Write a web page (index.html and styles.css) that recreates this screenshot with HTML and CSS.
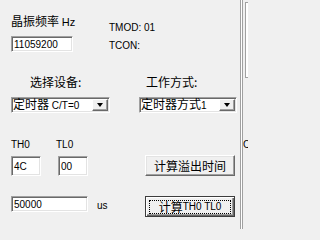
FILE: index.html
```html
<!DOCTYPE html>
<html>
<head>
<meta charset="utf-8">
<link rel="stylesheet" href="styles.css">
</head>
<body>
<div class="app">
  <div class="main">
    <div class="row1">
      <div class="col-freq">
        <div class="lbl"><span class="cjk">晶振频率</span> <span class="hz">Hz</span></div>
        <div class="field in-freq">11059200</div>
      </div>
      <div class="col-reg">
        <div class="reg">TMOD: 01</div>
        <div class="reg reg2">TCON:</div>
      </div>
    </div>
    <div class="row2">
      <div class="grp grp1">
        <div class="lbl cjk lbl-dev">选择设备:</div>
        <div class="field select sel1"><span class="sel-text"><span class="cjk">定时器</span> C/T=0</span><span class="dd"><span class="tri"></span></span></div>
      </div>
      <div class="grp grp2">
        <div class="lbl cjk lbl-mode">工作方式:</div>
        <div class="field select sel2"><span class="sel-text"><span class="cjk">定时器方式</span>1</span><span class="dd"><span class="tri"></span></span></div>
      </div>
    </div>
    <div class="row3">
      <div class="left">
        <div class="g-th">
          <div class="small-lbl">TH0</div>
          <div class="field in-hex">4C</div>
        </div>
        <div class="g-tl">
          <div class="small-lbl">TL0</div>
          <div class="field in-hex in-tl">00</div>
        </div>
      </div>
      <div class="btn btn1"><span class="cjk">计算溢出时间</span></div>
    </div>
    <div class="row4">
      <div class="left">
        <div class="field in-us">50000</div>
        <div class="us">us</div>
      </div>
      <div class="btn btn2"><span class="focus"><span class="cjk">计算</span>TH0 TL0</span></div>
    </div>
  </div>
  <div class="divider"></div>
  <div class="side">
    <div class="panel"></div>
    <div class="side-text">C</div>
  </div>
</div>
</body>
</html>
```
FILE: styles.css
```css
html, body {
  margin: 0;
  padding: 0;
}
body {
  background: #f0f0f0;
  font-family: "Liberation Sans", "Noto Sans CJK SC", sans-serif;
  font-size: 10px;
  color: #000;
  width: 248px;
  height: 229px;
  overflow: hidden;
}
.cjk {
  font-family: "Noto Sans CJK SC", sans-serif;
  font-size: 12px;
}
.app {
  display: flex;
  height: 229px;
}
.main {
  width: 229px;
  padding-left: 11px;
  flex: none;
}
.divider {
  width: 3px;
  flex: none;
  box-sizing: border-box;
  border-left: 1px solid #a0a0a0;
  border-right: 1px solid #a0a0a0;
  background: #fff;
}
.side {
  flex: 1;
  padding-left: 2px;
  overflow: hidden;
}
.panel {
  margin-top: 2px;
  height: 76px;
  width: 20px;
  box-sizing: border-box;
  border: 1px solid #a0a0a0;
  background: #fff;
}
.side-text {
  margin-top: 61px;
  margin-left: -2px;
  line-height: 12px;
}

/* fields */
.field {
  box-sizing: border-box;
  background: #fff;
  border: 1px solid;
  border-color: #a0a0a0 #fff #fff #a0a0a0;
  box-shadow: inset 1px 1px 0 #696969, inset -1px -1px 0 #e3e3e3;
  padding-left: 2px;
  display: flex;
  align-items: center;
}
.lbl {
  line-height: 14px;
  height: 14px;
  white-space: nowrap;
}
.hz {
  font-size: 11px;
}

.row1 {
  display: flex;
  padding-top: 14px;
}
.col-freq {
  width: 98px;
}
.in-freq {
  margin-top: 8px;
  width: 62px;
  height: 16px;
}
.col-reg {
  padding-top: 8px;
}
.reg {
  line-height: 12px;
  white-space: nowrap;
}
.reg2 {
  margin-top: 6px;
}

.row2 {
  display: flex;
  margin-top: 23px;
}
.grp1 {
  width: 128px;
}
.lbl-dev {
  padding-left: 19px;
}
.lbl-mode {
  padding-left: 7px;
}
.select {
  margin-top: 8px;
  height: 16px;
  padding-left: 1px;
  padding-right: 1px;
}
.sel1 {
  width: 99px;
}
.sel2 {
  width: 98px;
}
.sel-text {
  flex: 1;
  white-space: nowrap;
  line-height: 14px;
}
.dd {
  width: 16px;
  height: 12px;
  flex: none;
  box-sizing: border-box;
  background: #f0f0f0;
  border: 1px solid;
  border-color: #fff #696969 #696969 #fff;
  box-shadow: inset -1px -1px 0 #a0a0a0;
  display: flex;
  align-items: center;
  justify-content: center;
}
.tri {
  width: 0;
  height: 0;
  border-left: 3.5px solid transparent;
  border-right: 3.5px solid transparent;
  border-top: 4px solid #000;
}

.row3 {
  display: flex;
  align-items: flex-start;
  margin-top: 26px;
}
.left {
  width: 134px;
  display: flex;
  align-items: flex-start;
  flex: none;
}
.small-lbl {
  line-height: 12px;
  height: 12px;
}
.in-hex {
  margin-top: 5px;
  width: 30px;
  height: 20px;
}
.g-tl {
  margin-left: 15px;
}
.in-tl {
  margin-left: 2px;
}

.btn {
  box-sizing: border-box;
  width: 90px;
  height: 21px;
  background: #f0f0f0;
  border: 1px solid;
  border-color: #fff #696969 #696969 #fff;
  box-shadow: inset -1px -1px 0 #a0a0a0, inset 1px 1px 0 #e3e3e3;
  display: flex;
  align-items: center;
  justify-content: center;
  white-space: nowrap;
  line-height: 14px;
}
.btn1 {
  margin-top: 16px;
}

.row4 {
  display: flex;
  align-items: flex-start;
  margin-top: 20px;
}
.in-us {
  width: 77px;
  height: 16px;
}
.us {
  margin-left: 9px;
  line-height: 16px;
  padding-top: 2px;
}
.btn2 {
  border: 1px solid #3c3c3c;
  box-shadow: inset 1px 1px 0 #fff, inset -1px -1px 0 #696969, inset -2px -2px 0 #a0a0a0;
}
.focus {
  border: 1px dotted #000;
  padding: 0 4px;
  width: 72px;
  height: 12px;
  display: flex;
  align-items: center;
  justify-content: center;
  font-size: 10px;
}
```
